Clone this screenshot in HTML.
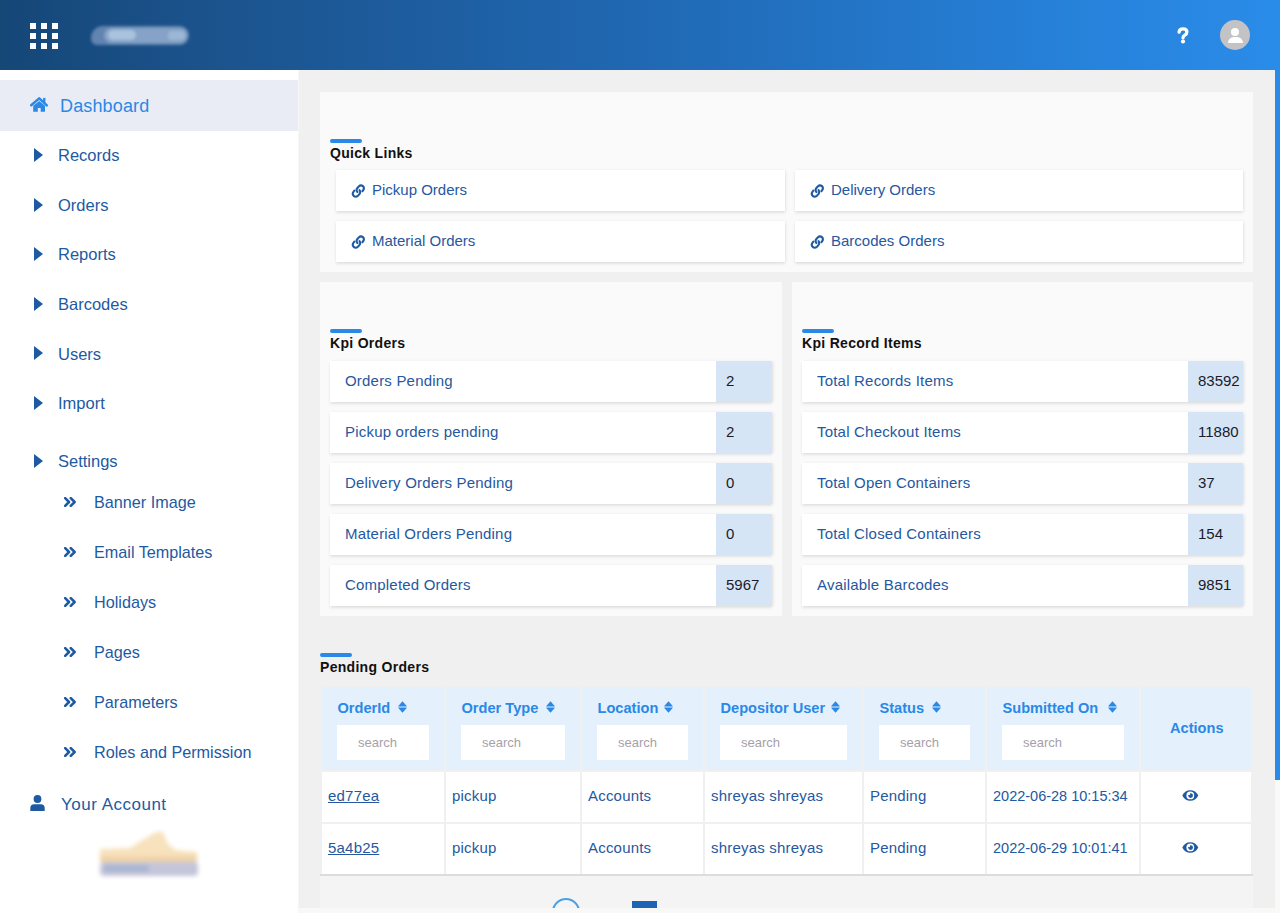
<!DOCTYPE html>
<html><head><meta charset="utf-8">
<style>
*{margin:0;padding:0;box-sizing:border-box}
html,body{width:1280px;height:913px;overflow:hidden;font-family:"Liberation Sans",sans-serif;background:#f0f0f0}
.abs{position:absolute}
#hdr{position:absolute;left:0;top:0;width:1280px;height:70px;background:linear-gradient(90deg,#154777 0%,#1b528b 15%,#2068b3 50%,#2783dc 86%,#2a8ce9 100%)}
.sq{position:absolute;width:5.5px;height:5.5px;background:#fff}
#side{position:absolute;left:0;top:70px;width:298px;height:843px;background:#fff}
#sideb{position:absolute;left:298px;top:70px;width:1px;height:843px;background:#f6f6f6}
.si{position:absolute;left:58px;font-size:16.5px;color:#1d5aa2;white-space:nowrap;line-height:20px}
.tri{position:absolute;left:34px;width:0;height:0;border-top:7.5px solid transparent;border-bottom:7.5px solid transparent;border-left:9px solid #1d5aa2}
.sub{position:absolute;left:94px;font-size:16.2px;color:#1d5aa2;white-space:nowrap;line-height:20px}
.chev{position:absolute;left:64px;width:13px;height:10px}
#main{position:absolute;left:299px;top:71px;width:976px;height:842px;background:#f0f0f0}
.card{position:absolute;background:#fafafa}
.bar{position:absolute;width:32px;height:4px;border-radius:2px;background:#2a88e6}
.ttl{position:absolute;font-size:14px;font-weight:bold;color:#111;white-space:nowrap;line-height:16px;letter-spacing:0.3px}
.lk{position:absolute;background:#fff;height:41px;box-shadow:0 2px 3px rgba(0,0,0,.09),1px 0 3px rgba(0,0,0,.05)}
.lk span{position:absolute;left:36px;top:11px;font-size:15px;color:#2558a0;white-space:nowrap;line-height:18px}
.lk svg{position:absolute;left:14px;top:13px}
.row{position:absolute;background:#fff;height:41px;box-shadow:0 2px 3px rgba(0,0,0,.09),2px 0 3px rgba(0,0,0,.05)}
.row .l{position:absolute;left:15px;top:11px;font-size:15px;color:#2558a0;white-space:nowrap;line-height:18px;letter-spacing:0.2px}
.row .v{position:absolute;top:0;right:0;width:56px;height:41px;background:#d5e5f6}
.row .v span{position:absolute;left:10px;top:11px;font-size:15px;color:#1b1b2b;line-height:18px}
table{position:absolute;left:320px;top:685px;border-collapse:separate;border-spacing:2px;background:#f0f0f0}
th{background:#e4f1fd;height:83px;vertical-align:top;text-align:left;padding:0}
td{background:#fff;height:50px;padding:0}
.th{position:relative;height:83px}
.th .h{position:absolute;left:16px;top:13px;font-size:14.6px;font-weight:bold;color:#2a88e6;white-space:nowrap;line-height:18px}
.th .in{position:absolute;left:15px;top:38px;height:35px;background:#fff}
.th .in span{position:absolute;left:21px;top:9px;font-size:13px;color:#a69fa9;line-height:16px}
.td{position:relative;height:50px}
.td span{position:absolute;left:6px;top:16px;font-size:15px;color:#2558a0;white-space:nowrap;line-height:18px}
.hh{position:absolute;top:699px;font-size:14.6px;font-weight:bold;color:#2a88e6;white-space:nowrap;line-height:18px}
.ph{position:absolute;top:735px;font-size:13px;color:#a69fa9;line-height:16px;white-space:nowrap}
.bt{position:absolute;font-size:15px;color:#2558a0;white-space:nowrap;line-height:18px;letter-spacing:0.2px}
</style></head><body>
<div id="hdr">
  <div class="sq" style="left:30px;top:23px"></div><div class="sq" style="left:41px;top:23px"></div><div class="sq" style="left:52px;top:23px"></div>
  <div class="sq" style="left:30px;top:33px"></div><div class="sq" style="left:41px;top:33px"></div><div class="sq" style="left:52px;top:33px"></div>
  <div class="sq" style="left:30px;top:43px"></div><div class="sq" style="left:41px;top:43px"></div><div class="sq" style="left:52px;top:43px"></div>
  <div class="abs" style="left:91px;top:26px;width:98px;height:19px;border-radius:12px 9px 9px 6px;background:#6284b0;filter:blur(1.5px)"></div>
  <div class="abs" style="left:104px;top:28px;width:83px;height:15px;border-radius:8px;background:#86a3c7;filter:blur(1.5px)"></div>
  <div class="abs" style="left:108px;top:30px;width:28px;height:10px;border-radius:5px;background:#a9c2dd;filter:blur(1.5px)"></div>
  <div class="abs" style="left:168px;top:31px;width:17px;height:9px;border-radius:4px;background:#9cb6d6;filter:blur(1.5px)"></div>
  <svg class="abs" style="left:1176.5px;top:27px" width="12" height="17" viewBox="0 0 12 17"><path d="M2.1 5.2 Q2.1 1.9 6 1.9 Q9.9 1.9 9.9 5 Q9.9 7 7.7 8.2 Q6 9.1 6 10.9" fill="none" stroke="#fff" stroke-width="3.3" stroke-linecap="round" stroke-linejoin="round"/><circle cx="6" cy="14.5" r="2.05" fill="#fff"/></svg>
  <div class="abs" style="left:1220px;top:20px;width:30px;height:30px;border-radius:50%;background:#c3c3c6"></div>
  <div class="abs" style="left:1231px;top:27.5px;width:8px;height:8px;border-radius:50%;background:#fff"></div>
  <div class="abs" style="left:1227.5px;top:37px;width:15px;height:6px;border-radius:7px 7px 0 0;background:#fff"></div>
</div>
<div id="side"></div>
<div id="sideb"></div>
<div class="abs" style="left:0;top:80px;width:298px;height:51px;background:#e9ecf4"></div>
<svg class="abs" style="left:30px;top:97px" width="18" height="15" viewBox="0 0 18 15"><path d="M1.2 8.3 L9.25 1.4 L16.8 8.3" fill="none" stroke="#2a88e6" stroke-width="2.5" stroke-linecap="round" stroke-linejoin="round"/><rect x="13.1" y="0.9" width="2.3" height="5" fill="#2a88e6"/><path d="M3.2 8.8 L9.25 3.9 L15 8.8 L15 14.8 L10.7 14.8 L10.7 10.9 L7.8 10.9 L7.8 14.8 L3.2 14.8 Z" fill="#2a88e6"/></svg>
<div class="si" style="left:60px;top:95.5px;font-size:18px;letter-spacing:0.15px;color:#2a88e6">Dashboard</div>
<div class="tri" style="top:148px"></div><div class="si" style="top:145px">Records</div>
<div class="tri" style="top:197.5px"></div><div class="si" style="top:195px">Orders</div>
<div class="tri" style="top:247px"></div><div class="si" style="top:244px">Reports</div>
<div class="tri" style="top:296.5px"></div><div class="si" style="top:294px">Barcodes</div>
<div class="tri" style="top:346px"></div><div class="si" style="top:344px">Users</div>
<div class="tri" style="top:396px"></div><div class="si" style="top:393px">Import</div>
<div class="tri" style="top:454px"></div><div class="si" style="top:451px">Settings</div>
<svg class="chev" style="top:497px" viewBox="0 0 13 10"><path d="M1.2 1.2 L5 5 L1.2 8.8 M6.8 1.2 L10.6 5 L6.8 8.8" fill="none" stroke="#1d5aa2" stroke-width="2.6" stroke-linecap="round" stroke-linejoin="round"/></svg><div class="sub" style="top:492px">Banner Image</div>
<svg class="chev" style="top:547px" viewBox="0 0 13 10"><path d="M1.2 1.2 L5 5 L1.2 8.8 M6.8 1.2 L10.6 5 L6.8 8.8" fill="none" stroke="#1d5aa2" stroke-width="2.6" stroke-linecap="round" stroke-linejoin="round"/></svg><div class="sub" style="top:542px">Email Templates</div>
<svg class="chev" style="top:597px" viewBox="0 0 13 10"><path d="M1.2 1.2 L5 5 L1.2 8.8 M6.8 1.2 L10.6 5 L6.8 8.8" fill="none" stroke="#1d5aa2" stroke-width="2.6" stroke-linecap="round" stroke-linejoin="round"/></svg><div class="sub" style="top:592px">Holidays</div>
<svg class="chev" style="top:647px" viewBox="0 0 13 10"><path d="M1.2 1.2 L5 5 L1.2 8.8 M6.8 1.2 L10.6 5 L6.8 8.8" fill="none" stroke="#1d5aa2" stroke-width="2.6" stroke-linecap="round" stroke-linejoin="round"/></svg><div class="sub" style="top:642px">Pages</div>
<svg class="chev" style="top:697px" viewBox="0 0 13 10"><path d="M1.2 1.2 L5 5 L1.2 8.8 M6.8 1.2 L10.6 5 L6.8 8.8" fill="none" stroke="#1d5aa2" stroke-width="2.6" stroke-linecap="round" stroke-linejoin="round"/></svg><div class="sub" style="top:692px">Parameters</div>
<svg class="chev" style="top:747px" viewBox="0 0 13 10"><path d="M1.2 1.2 L5 5 L1.2 8.8 M6.8 1.2 L10.6 5 L6.8 8.8" fill="none" stroke="#1d5aa2" stroke-width="2.6" stroke-linecap="round" stroke-linejoin="round"/></svg><div class="sub" style="top:742px">Roles and Permission</div>
<svg class="abs" style="left:30px;top:795px" width="15" height="16" viewBox="0 0 15 16"><circle cx="7.5" cy="4" r="3.9" fill="#1d5aa2"/><path d="M0.3 16 L0.3 13 Q0.3 9.2 4.2 9.2 L10.8 9.2 Q14.7 9.2 14.7 13 L14.7 16 Z" fill="#1d5aa2"/></svg>
<div class="si" style="left:61px;top:794.5px;font-size:17px;letter-spacing:0.5px">Your Account</div>
<svg class="abs" style="left:90px;top:820px;filter:blur(2px)" width="120" height="65" viewBox="0 0 120 65"><path d="M10 29 L40 28 Q48 22 58 17 Q66 11 73 12 L78 24 L86 30 L107 32 L107 42 L10 42 Z" fill="#f7e2bd"/><path d="M10 36 L107 36 L107 42 L10 42 Z" fill="#f0d3a8"/><rect x="10" y="42" width="98" height="14" rx="4" fill="#c5c5da"/><rect x="14" y="45" width="45" height="7" rx="3" fill="#a9b6d2"/></svg>
<div id="main"></div>
<!-- Quick links -->
<div class="card" style="left:320px;top:92px;width:933px;height:180px"></div>
<div class="bar" style="left:330px;top:139px"></div>
<div class="ttl" style="left:330px;top:145px">Quick Links</div>
<div class="lk" style="left:336px;top:170px;width:449px"><svg width="16" height="16" viewBox="0 0 16 16"><g fill="none" stroke="#1d5aa2" stroke-width="2.1" stroke-linecap="round"><path d="M7.4 9 Q5.6 7 7.6 4.7 L8.8 3.4 Q10.8 1.4 12.9 3.1 Q14.8 5 13 7.4 L12.5 8.1"/><path d="M4.3 7.7 L3.6 8.6 Q1.8 10.9 3.7 12.9 Q5.8 14.7 7.9 12.7 L9.2 11.4 Q11.1 9.2 9.5 7"/></g></svg><span>Pickup Orders</span></div>
<div class="lk" style="left:795px;top:170px;width:448px"><svg width="16" height="16" viewBox="0 0 16 16"><g fill="none" stroke="#1d5aa2" stroke-width="2.1" stroke-linecap="round"><path d="M7.4 9 Q5.6 7 7.6 4.7 L8.8 3.4 Q10.8 1.4 12.9 3.1 Q14.8 5 13 7.4 L12.5 8.1"/><path d="M4.3 7.7 L3.6 8.6 Q1.8 10.9 3.7 12.9 Q5.8 14.7 7.9 12.7 L9.2 11.4 Q11.1 9.2 9.5 7"/></g></svg><span>Delivery Orders</span></div>
<div class="lk" style="left:336px;top:221px;width:449px"><svg width="16" height="16" viewBox="0 0 16 16"><g fill="none" stroke="#1d5aa2" stroke-width="2.1" stroke-linecap="round"><path d="M7.4 9 Q5.6 7 7.6 4.7 L8.8 3.4 Q10.8 1.4 12.9 3.1 Q14.8 5 13 7.4 L12.5 8.1"/><path d="M4.3 7.7 L3.6 8.6 Q1.8 10.9 3.7 12.9 Q5.8 14.7 7.9 12.7 L9.2 11.4 Q11.1 9.2 9.5 7"/></g></svg><span>Material Orders</span></div>
<div class="lk" style="left:795px;top:221px;width:448px"><svg width="16" height="16" viewBox="0 0 16 16"><g fill="none" stroke="#1d5aa2" stroke-width="2.1" stroke-linecap="round"><path d="M7.4 9 Q5.6 7 7.6 4.7 L8.8 3.4 Q10.8 1.4 12.9 3.1 Q14.8 5 13 7.4 L12.5 8.1"/><path d="M4.3 7.7 L3.6 8.6 Q1.8 10.9 3.7 12.9 Q5.8 14.7 7.9 12.7 L9.2 11.4 Q11.1 9.2 9.5 7"/></g></svg><span>Barcodes Orders</span></div>
<!-- KPI orders -->
<div class="card" style="left:320px;top:282px;width:462px;height:334px"></div>
<div class="bar" style="left:330px;top:329px"></div>
<div class="ttl" style="left:330px;top:335px">Kpi Orders</div>
<div class="row" style="left:330px;top:361px;width:442px"><span class="l">Orders Pending</span><div class="v"><span>2</span></div></div>
<div class="row" style="left:330px;top:412px;width:442px"><span class="l">Pickup orders pending</span><div class="v"><span>2</span></div></div>
<div class="row" style="left:330px;top:463px;width:442px"><span class="l">Delivery Orders Pending</span><div class="v"><span>0</span></div></div>
<div class="row" style="left:330px;top:514px;width:442px"><span class="l">Material Orders Pending</span><div class="v"><span>0</span></div></div>
<div class="row" style="left:330px;top:565px;width:442px"><span class="l">Completed Orders</span><div class="v"><span>5967</span></div></div>
<!-- KPI records -->
<div class="card" style="left:792px;top:282px;width:461px;height:334px"></div>
<div class="bar" style="left:802px;top:329px"></div>
<div class="ttl" style="left:802px;top:335px">Kpi Record Items</div>
<div class="row" style="left:802px;top:361px;width:441px"><span class="l">Total Records Items</span><div class="v" style="width:55px"><span>83592</span></div></div>
<div class="row" style="left:802px;top:412px;width:441px"><span class="l">Total Checkout Items</span><div class="v" style="width:55px"><span>11880</span></div></div>
<div class="row" style="left:802px;top:463px;width:441px"><span class="l">Total Open Containers</span><div class="v" style="width:55px"><span>37</span></div></div>
<div class="row" style="left:802px;top:514px;width:441px"><span class="l">Total Closed Containers</span><div class="v" style="width:55px"><span>154</span></div></div>
<div class="row" style="left:802px;top:565px;width:441px"><span class="l">Available Barcodes</span><div class="v" style="width:55px"><span>9851</span></div></div>
<!-- Pending orders -->
<div class="bar" style="left:320px;top:653px"></div>
<div class="ttl" style="left:320px;top:659px">Pending Orders</div>
<!-- table -->
<div class="abs" style="left:322px;top:687px;width:122px;height:83px;background:#e4f1fd"></div>
<div class="hh" style="left:337.5px" id="h0">OrderId</div>
<div class="abs" style="left:337px;top:725px;width:92px;height:35px;background:#fff"></div>
<div class="ph" style="left:358px">search</div>
<div class="abs" style="left:322px;top:772px;width:122px;height:50px;background:#fff"></div>
<div class="abs" style="left:322px;top:824px;width:122px;height:50px;background:#fff"></div>
<div class="bt" style="left:328px;top:787px;text-decoration:underline">ed77ea</div>
<div class="bt" style="left:328px;top:839px;text-decoration:underline">5a4b25</div>
<div class="abs" style="left:446px;top:687px;width:134px;height:83px;background:#e4f1fd"></div>
<div class="hh" style="left:461.5px" id="h1">Order Type</div>
<div class="abs" style="left:461px;top:725px;width:104px;height:35px;background:#fff"></div>
<div class="ph" style="left:482px">search</div>
<div class="abs" style="left:446px;top:772px;width:134px;height:50px;background:#fff"></div>
<div class="abs" style="left:446px;top:824px;width:134px;height:50px;background:#fff"></div>
<div class="bt" style="left:452px;top:787px">pickup</div>
<div class="bt" style="left:452px;top:839px">pickup</div>
<div class="abs" style="left:582px;top:687px;width:121px;height:83px;background:#e4f1fd"></div>
<div class="hh" style="left:597.5px" id="h2">Location</div>
<div class="abs" style="left:597px;top:725px;width:91px;height:35px;background:#fff"></div>
<div class="ph" style="left:618px">search</div>
<div class="abs" style="left:582px;top:772px;width:121px;height:50px;background:#fff"></div>
<div class="abs" style="left:582px;top:824px;width:121px;height:50px;background:#fff"></div>
<div class="bt" style="left:588px;top:787px">Accounts</div>
<div class="bt" style="left:588px;top:839px">Accounts</div>
<div class="abs" style="left:705px;top:687px;width:157px;height:83px;background:#e4f1fd"></div>
<div class="hh" style="left:720.5px" id="h3">Depositor User</div>
<div class="abs" style="left:720px;top:725px;width:127px;height:35px;background:#fff"></div>
<div class="ph" style="left:741px">search</div>
<div class="abs" style="left:705px;top:772px;width:157px;height:50px;background:#fff"></div>
<div class="abs" style="left:705px;top:824px;width:157px;height:50px;background:#fff"></div>
<div class="bt" style="left:711px;top:787px">shreyas shreyas</div>
<div class="bt" style="left:711px;top:839px">shreyas shreyas</div>
<div class="abs" style="left:864px;top:687px;width:121px;height:83px;background:#e4f1fd"></div>
<div class="hh" style="left:879.5px" id="h4">Status</div>
<div class="abs" style="left:879px;top:725px;width:91px;height:35px;background:#fff"></div>
<div class="ph" style="left:900px">search</div>
<div class="abs" style="left:864px;top:772px;width:121px;height:50px;background:#fff"></div>
<div class="abs" style="left:864px;top:824px;width:121px;height:50px;background:#fff"></div>
<div class="bt" style="left:870px;top:787px">Pending</div>
<div class="bt" style="left:870px;top:839px">Pending</div>
<div class="abs" style="left:987px;top:687px;width:152px;height:83px;background:#e4f1fd"></div>
<div class="hh" style="left:1002.5px" id="h5">Submitted On</div>
<div class="abs" style="left:1002px;top:725px;width:122px;height:35px;background:#fff"></div>
<div class="ph" style="left:1023px">search</div>
<div class="abs" style="left:987px;top:772px;width:152px;height:50px;background:#fff"></div>
<div class="abs" style="left:987px;top:824px;width:152px;height:50px;background:#fff"></div>
<div class="bt" style="left:993px;top:787px"><span style="font-size:14.5px;letter-spacing:0">2022-06-28 10:15:34</span></div>
<div class="bt" style="left:993px;top:839px"><span style="font-size:14.5px;letter-spacing:0">2022-06-29 10:01:41</span></div>
<div class="abs" style="left:1141px;top:687px;width:110px;height:83px;background:#e4f1fd"></div>
<div class="hh" style="left:1170px;top:719px">Actions</div>
<svg class="abs" style="left:398px;top:701px" width="9" height="12" viewBox="0 0 9 12"><path d="M4.5 0.3 L8.7 4.9 Q9 5.4 8.3 5.4 L0.7 5.4 Q0 5.4 0.3 4.9 Z M4.5 11.7 L8.7 7.1 Q9 6.6 8.3 6.6 L0.7 6.6 Q0 6.6 0.3 7.1 Z" fill="#2a88e6"/></svg>
<svg class="abs" style="left:546px;top:701px" width="9" height="12" viewBox="0 0 9 12"><path d="M4.5 0.3 L8.7 4.9 Q9 5.4 8.3 5.4 L0.7 5.4 Q0 5.4 0.3 4.9 Z M4.5 11.7 L8.7 7.1 Q9 6.6 8.3 6.6 L0.7 6.6 Q0 6.6 0.3 7.1 Z" fill="#2a88e6"/></svg>
<svg class="abs" style="left:664px;top:701px" width="9" height="12" viewBox="0 0 9 12"><path d="M4.5 0.3 L8.7 4.9 Q9 5.4 8.3 5.4 L0.7 5.4 Q0 5.4 0.3 4.9 Z M4.5 11.7 L8.7 7.1 Q9 6.6 8.3 6.6 L0.7 6.6 Q0 6.6 0.3 7.1 Z" fill="#2a88e6"/></svg>
<svg class="abs" style="left:831px;top:701px" width="9" height="12" viewBox="0 0 9 12"><path d="M4.5 0.3 L8.7 4.9 Q9 5.4 8.3 5.4 L0.7 5.4 Q0 5.4 0.3 4.9 Z M4.5 11.7 L8.7 7.1 Q9 6.6 8.3 6.6 L0.7 6.6 Q0 6.6 0.3 7.1 Z" fill="#2a88e6"/></svg>
<svg class="abs" style="left:931.5px;top:701px" width="9" height="12" viewBox="0 0 9 12"><path d="M4.5 0.3 L8.7 4.9 Q9 5.4 8.3 5.4 L0.7 5.4 Q0 5.4 0.3 4.9 Z M4.5 11.7 L8.7 7.1 Q9 6.6 8.3 6.6 L0.7 6.6 Q0 6.6 0.3 7.1 Z" fill="#2a88e6"/></svg>
<svg class="abs" style="left:1108px;top:701px" width="9" height="12" viewBox="0 0 9 12"><path d="M4.5 0.3 L8.7 4.9 Q9 5.4 8.3 5.4 L0.7 5.4 Q0 5.4 0.3 4.9 Z M4.5 11.7 L8.7 7.1 Q9 6.6 8.3 6.6 L0.7 6.6 Q0 6.6 0.3 7.1 Z" fill="#2a88e6"/></svg>
<div class="abs" style="left:1141px;top:772px;width:110px;height:50px;background:#fff"></div>
<div class="abs" style="left:1141px;top:824px;width:110px;height:50px;background:#fff"></div>
<svg class="abs" style="left:1182px;top:790px" width="17" height="11" viewBox="0 0 17 11"><path d="M8.3 0.2 Q13.6 0.2 16.3 5.4 Q13.6 10.7 8.3 10.7 Q3 10.7 0.3 5.4 Q3 0.2 8.3 0.2 Z" fill="#1d5aa2"/><circle cx="8.3" cy="5.4" r="3.9" fill="#fff"/><circle cx="8.6" cy="5.6" r="2.4" fill="#1d5aa2"/><circle cx="7.1" cy="4.1" r="1.1" fill="#fff"/></svg>
<svg class="abs" style="left:1182px;top:842px" width="17" height="11" viewBox="0 0 17 11"><path d="M8.3 0.2 Q13.6 0.2 16.3 5.4 Q13.6 10.7 8.3 10.7 Q3 10.7 0.3 5.4 Q3 0.2 8.3 0.2 Z" fill="#1d5aa2"/><circle cx="8.3" cy="5.4" r="3.9" fill="#fff"/><circle cx="8.6" cy="5.6" r="2.4" fill="#1d5aa2"/><circle cx="7.1" cy="4.1" r="1.1" fill="#fff"/></svg>
<div class="abs" style="left:320px;top:874px;width:933px;height:2px;background:#dcdcdc"></div>
<div class="abs" style="left:320px;top:876px;width:933px;height:37px;background:#f4f4f4"></div>
<div class="abs" style="left:552px;top:898px;width:28px;height:28px;border-radius:50%;border:2px solid #4aa0e8"></div>
<div class="abs" style="left:632px;top:901px;width:25px;height:12px;background:#1e64b4"></div>
<div class="abs" style="left:299px;top:908px;width:976px;height:5px;background:#f8f8f6"></div>
<div class="abs" style="left:1275px;top:70px;width:5px;height:843px;background:#f9f9f7"></div>
<div class="abs" style="left:1275px;top:70px;width:5px;height:710px;background:#2a8ae8"></div>
</body></html>
